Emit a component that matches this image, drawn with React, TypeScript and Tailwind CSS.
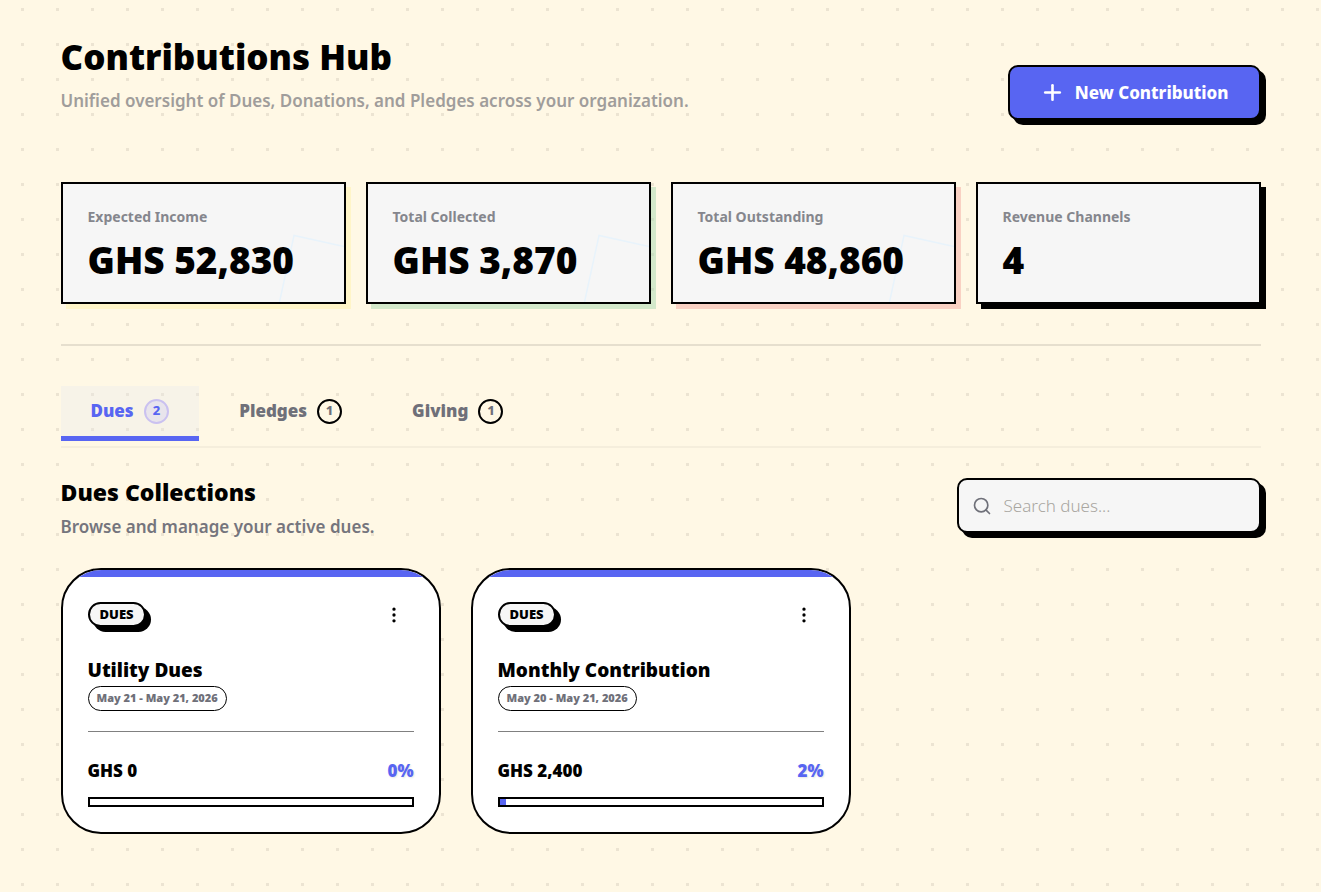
import React from "react";
import { EllipsisVertical, Plus, Search } from "lucide-react";

type Stat = { label: string; value: string; shadow: string; accent: boolean };
type Tab = { label: string; count: number; active: boolean };
type Collection = { name: string; period: string; amount: string; percent: number };

const stats: Stat[] = [
  { label: "Expected Income", value: "GHS 52,830", shadow: "shadow-[5px_5px_0_#fff5c8]", accent: true },
  { label: "Total Collected", value: "GHS 3,870", shadow: "shadow-[5px_5px_0_#a7d8af80]", accent: true },
  { label: "Total Outstanding", value: "GHS 48,860", shadow: "shadow-[5px_5px_0_#f9d1c3]", accent: true },
  { label: "Revenue Channels", value: "4", shadow: "shadow-[5px_5px_0_#000]", accent: false },
];

const tabs: Tab[] = [
  { label: "Dues", count: 2, active: true },
  { label: "Pledges", count: 1, active: false },
  { label: "Giving", count: 1, active: false },
];

const collections: Collection[] = [
  { name: "Utility Dues", period: "May 21 - May 21, 2026", amount: "GHS 0", percent: 0 },
  { name: "Monthly Contribution", period: "May 20 - May 21, 2026", amount: "GHS 2,400", percent: 2 },
];

function StatCard({ label, value, shadow, accent }: Stat) {
  return (
    <article className={`relative border-2 border-black bg-[#f6f6f6] px-[25px] pt-[21px] pb-[17px] ${shadow}`}>
      {accent && (
        <svg className="absolute right-0 bottom-0 h-[68px] w-[68px]" viewBox="0 0 68 68" fill="none" aria-hidden="true">
          <path d="M3.5 68 18 1.5 68 12.5" stroke="#e8f3fb" strokeWidth="1.5" />
        </svg>
      )}
      <h2 className="relative text-sm leading-6 font-bold text-[#85868d]">{label}</h2>
      <p className="relative mt-1.5 text-[37px] leading-[50px] font-black">{value}</p>
    </article>
  );
}

function TabButton({ label, count, active }: Tab) {
  return (
    <button
      role="tab"
      aria-selected={active}
      className={`flex h-[55px] items-center gap-2.5 border-b-5 px-[30px] text-[17px] font-black ${
        active ? "border-[#5865f2] bg-[#e4e7ef]/30 text-[#5865f2]" : "border-transparent text-[#6f7079]"
      }`}
    >
      {label}
      <span
        className={`flex h-[25px] min-w-[25px] items-center justify-center rounded-full border-2 text-[13px] font-extrabold ${
          active ? "border-[#cac1f0] bg-[#e8e4ec] px-[7px]" : "border-black"
        }`}
      >
        {count}
      </span>
    </button>
  );
}

function CollectionCard({ name, period, amount, percent }: Collection) {
  return (
    <article className="overflow-hidden rounded-[40px] border-2 border-black bg-white">
      <div className="h-[7px] bg-[#5865f2]" />
      <div className="px-[25px] pt-[25px] pb-[25px]">
        <div className="flex items-start justify-between">
          <span className="flex h-[25px] items-center rounded-full border-2 border-black bg-[#f6f6f6] px-2.5 text-[13px] font-black shadow-[5px_5px_0_#000]">
            DUES
          </span>
          <button aria-label={`Options for ${name}`} className="flex h-[26px] w-10 items-center justify-center">
            <EllipsisVertical size={20} strokeWidth={2} />
          </button>
        </div>
        <h3 className="mt-[26px] text-[19px] leading-8 font-black">{name}</h3>
        <p className="flex h-[25px] w-fit items-center rounded-full border border-black px-2 text-[11px] font-black text-[#6f7079]">
          {period}
        </p>
        <hr className="mt-5 border-[#808080]" />
        <div className="mt-[26px] flex items-center justify-between text-[17px] leading-[26px] font-black">
          <span>{amount}</span>
          <span className="text-[#5865f2] [text-shadow:1px_1px_2px_#0000001a]">{percent}%</span>
        </div>
        <div
          role="progressbar"
          aria-label={`${name} collected`}
          aria-valuenow={percent}
          aria-valuemin={0}
          aria-valuemax={100}
          className="mt-[13px] h-2.5 border-2 border-black bg-white"
        >
          <div className="h-full bg-[#5865f2]" style={{ width: `${percent}%` }} />
        </div>
      </div>
    </article>
  );
}

export default function App() {
  return (
    <div className="min-h-screen bg-[#fff8e5] bg-[conic-gradient(from_90deg_at_3px_3px,transparent_180deg,#ece4d2_180deg,#ece4d2_270deg,transparent_270deg)] bg-[size:35px_35px] bg-[position:21px_8px] px-[60px] font-['Noto_Sans','Open_Sans',sans-serif] text-black">
      <main className="mx-auto max-w-[1200px] pt-[30px] pb-[58px]">
        <header className="flex flex-wrap items-end justify-between gap-4">
          <div className="pb-0.5">
            <h1 className="text-[35px] leading-[54px] font-black">Contributions Hub</h1>
            <p className="text-[17px] leading-[34px] font-semibold text-[#a09d9b]">
              Unified oversight of Dues, Donations, and Pledges across your organization.
            </p>
          </div>
          <button className="flex h-[55px] items-center gap-2.5 rounded-[10px] border-2 border-black bg-[#5865f2] px-[30px] text-[17px] font-extrabold text-white shadow-[5px_5px_0_#000]">
            <Plus size={25} strokeWidth={2.5} />
            New Contribution
          </button>
        </header>

        <section aria-label="Summary" className="mt-[62px] grid grid-cols-2 gap-5 lg:grid-cols-4">
          {stats.map((s) => (
            <StatCard key={s.label} {...s} />
          ))}
        </section>

        <hr className="mt-10 border-t-2 border-[#e6dfce]" />

        <div role="tablist" className="mt-10 flex gap-2.5 border-b-2 border-[#f5eedc] pb-[5px]">
          {tabs.map((t) => (
            <TabButton key={t.label} {...t} />
          ))}
        </div>

        <div className="mt-[30px] flex flex-wrap items-start justify-between gap-4">
          <div>
            <h2 className="text-[23px] leading-7 font-black">Dues Collections</h2>
            <p className="mt-[7px] text-[17px] leading-7 font-semibold text-[#75757d]">Browse and manage your active dues.</p>
          </div>
          <label className="flex h-[55px] w-[304px] items-center gap-3 rounded-[10px] border-2 border-black bg-[#f6f6f6] px-[13px] shadow-[5px_5px_0_#000]">
            <Search size={20} strokeWidth={2} className="shrink-0 text-[#6f7079]" />
            <input
              type="search"
              aria-label="Search dues"
              placeholder="Search dues..."
              className="min-w-0 flex-1 bg-transparent text-[17px] font-light outline-none placeholder:text-[#a9a6a1]"
            />
          </label>
        </div>

        <section aria-label="Dues collections" className="mt-[27px] grid grid-cols-1 gap-[30px] md:grid-cols-2 lg:grid-cols-3">
          {collections.map((c) => (
            <CollectionCard key={c.name} {...c} />
          ))}
        </section>
      </main>
    </div>
  );
}
